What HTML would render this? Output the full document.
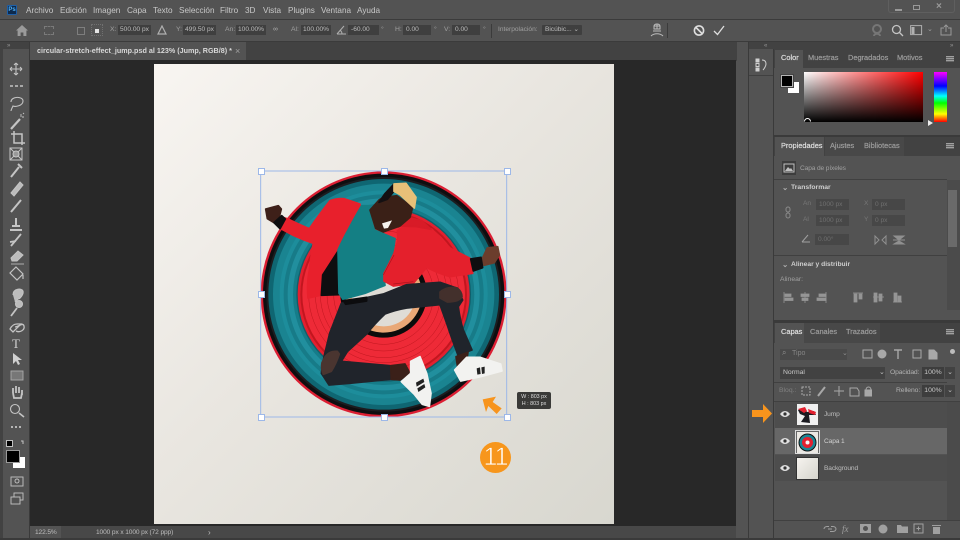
<!DOCTYPE html>
<html><head><meta charset="utf-8"><style>
html,body{margin:0;padding:0;background:#535353}
#r{position:relative;width:960px;height:540px;overflow:hidden;background:#535353;font-family:"Liberation Sans",sans-serif;color:#d0d0d0;filter:blur(.3px)}
#r div,#r svg{position:absolute}
.t{white-space:nowrap;font-size:8px;line-height:10px}
.m{top:5px;font-size:8.2px;line-height:11px;color:#c8c8c8;white-space:nowrap;position:absolute}
.o{top:25px;font-size:6.8px;line-height:10px;color:#a0a0a0;white-space:nowrap}
.f{top:25px;height:10px;background:#3f3f3f;color:#bdbdbd;font-size:6.6px;line-height:10px;text-align:center;white-space:nowrap}
.l{background:#3b3b3b}
.h{width:5px;height:5px;background:#fff;border:1px solid #9db8e8;box-sizing:content-box}
.g{background:#474747;color:#707070;font-size:6.6px;line-height:11px;height:11px;padding-left:3px;box-sizing:border-box;white-space:nowrap}
.d{color:#777;font-size:6.6px;line-height:10px;white-space:nowrap}
.tb{font-size:7.4px;-webkit-text-stroke:.2px currentColor;color:#9c9c9c}
.tb.a{color:#dedede}
.n{font-size:6.6px;letter-spacing:-.12px;color:#bdbdbd}
.p path{stroke:currentColor;fill:currentColor;stroke-width:5;stroke-linejoin:round}
</style></head><body><div id="r">
<!-- bars -->
<div class="l" style="left:0;top:19px;width:960px;height:1px"></div>
<div class="l" style="left:0;top:41px;width:960px;height:1px"></div>
<div style="left:7px;top:5px;width:10px;height:10px;background:#0d2a4d;border:1px solid #1d5fa8;box-sizing:border-box;border-radius:1px;color:#4fb0f5;font-size:6px;line-height:8px;font-weight:bold;text-align:center">Ps</div>
<div class="m" style="left:26px">Archivo</div><div class="m" style="left:60px">Edición</div><div class="m" style="left:93px">Imagen</div><div class="m" style="left:127px">Capa</div><div class="m" style="left:153px">Texto</div><div class="m" style="left:179px">Selección</div><div class="m" style="left:220px">Filtro</div><div class="m" style="left:245px">3D</div><div class="m" style="left:263px">Vista</div><div class="m" style="left:288px">Plugins</div><div class="m" style="left:321px">Ventana</div><div class="m" style="left:357px">Ayuda</div>
<!-- window controls -->
<div style="left:888px;top:0;width:67px;height:13px;border:1px solid #5f5f5f;border-top:0;border-radius:0 0 3px 3px;box-sizing:border-box"></div>
<div style="left:895px;top:9px;width:7px;height:1.5px;background:#999"></div>
<div style="left:913px;top:5px;width:7px;height:5px;border:1.3px solid #999;box-sizing:border-box"></div>
<div class="t" style="left:936px;top:2px;font-size:10px;color:#999;font-weight:bold">×</div>
<!-- options -->
<svg style="left:16px;top:25px" width="12" height="11" viewBox="0 0 12 11"><path d="M6 0L0 5.500h1.600V11h3V7.500h2.800V11h3V5.500H12z" fill="#9a9a9a"/></svg>
<div style="left:44px;top:26px;width:10px;height:9px;border:1px dashed #7a7a7a;box-sizing:border-box"></div>
<div style="left:77px;top:27px;width:8px;height:8px;border:1px solid #7e7e7e;box-sizing:border-box"></div>
<div style="left:91px;top:24px;width:12px;height:12px;border:1px dotted #707070;box-sizing:border-box"></div>
<div style="left:95px;top:29px;width:4px;height:4px;background:#e4e4e4"></div>
<div class="o" style="left:110px">X:</div><div class="f" style="left:118px;width:33px">500.00 px</div>
<svg style="left:157px;top:25px" width="10" height="10"><path d="M5 1L9 9H1z" fill="none" stroke="#b0b0b0" stroke-width="1.200"/></svg>
<div class="o" style="left:176px">Y:</div><div class="f" style="left:183px;width:33px">499.50 px</div>
<div class="o" style="left:225px">An:</div><div class="f" style="left:236px;width:30px">100.00%</div>
<div class="o" style="left:273px;color:#b0b0b0">∞</div>
<div class="o" style="left:291px">Al:</div><div class="f" style="left:301px;width:30px">100.00%</div>
<svg style="left:336px;top:25px" width="11" height="10"><path d="M1 9H10M1 9L8 1M6 9A5 5 0 0 0 4.500 5.500" fill="none" stroke="#b0b0b0"/></svg>
<div class="f" style="left:348px;width:31px;text-align:left;padding-left:3px;box-sizing:border-box">-60.00</div><div class="o" style="left:381px">°</div>
<div class="o" style="left:395px">H:</div><div class="f" style="left:403px;width:28px;text-align:left;padding-left:3px;box-sizing:border-box">0.00</div><div class="o" style="left:434px">°</div>
<div class="o" style="left:444px">V:</div><div class="f" style="left:452px;width:28px;text-align:left;padding-left:3px;box-sizing:border-box">0.00</div><div class="o" style="left:483px">°</div>
<div class="l" style="left:491px;top:24px;width:1px;height:14px"></div>
<div class="o" style="left:498px;font-size:6.6px">Interpolación:</div><div class="f" style="left:542px;width:40px;background:#3f3f3f;border-radius:1px">Bicúbic... ⌄</div>
<svg style="left:650px;top:23px" width="14" height="15" viewBox="0 0 14 15" fill="none" stroke="#bcbcbc"><path d="M4 3a3 2 0 0 1 6 0v3H4zM4 3h6M7 1v5M3 8h8M1 13c3-3 9-3 12 0"/></svg>
<div class="l" style="left:667px;top:23px;width:1px;height:15px"></div>
<svg style="left:693px;top:24px" width="12" height="13" viewBox="0 0 12 13"><circle cx="6" cy="6.500" r="4.600" fill="none" stroke="#dedede" stroke-width="1.600"/><path d="M3 3.500L9 9.500" stroke="#dedede" stroke-width="1.600"/></svg>
<svg style="left:713px;top:25px" width="12" height="11" viewBox="0 0 12 11"><path d="M1 6L4.500 9.500L11 1" fill="none" stroke="#dedede" stroke-width="1.300"/></svg>
<svg style="left:871px;top:24px" width="12" height="13" viewBox="0 0 12 13" fill="none" stroke="#767676" stroke-width="2"><circle cx="6" cy="5" r="4"/><path d="M3 12c0-3 6-3 6 0"/></svg>
<svg style="left:891px;top:24px" width="13" height="13" viewBox="0 0 13 13" fill="none" stroke="#c4c4c4" stroke-width="1.300"><circle cx="5.500" cy="5.500" r="4"/><path d="M8.500 8.500L12 12"/></svg>
<svg style="left:910px;top:25px" width="13" height="11" viewBox="0 0 13 11"><rect x=".6" y=".6" width="11" height="9" fill="none" stroke="#b0b0b0"/><rect x="1.500" y="2" width="3" height="7" fill="#b0b0b0"/></svg>
<div class="o" style="left:927px;top:25px;color:#a0a0a0">⌄</div>
<svg style="left:940px;top:24px" width="12" height="12" viewBox="0 0 12 12" fill="none" stroke="#999"><path d="M4 4H1v7h10V4H8M6 8V1M4 3l2-2 2 2"/></svg>
<!-- tab row -->
<div style="left:0;top:42px;width:960px;height:498px;background:#535353"></div>
<div style="left:30px;top:42px;width:707px;height:19px;background:#424242"></div>
<div style="left:30px;top:42px;width:216px;height:18px;background:#535353"></div>
<div class="t" style="left:37px;top:46px;font-size:7.2px;font-weight:bold;color:#d8d8d8">circular-stretch-effect_jump.psd al 123% (Jump, RGB/8) *</div>
<div class="t" style="left:235px;top:46px;color:#a0a0a0;font-size:9px">×</div>
<div style="left:3px;top:42px;width:26px;height:7px;background:#424242"></div>
<div class="t" style="left:7px;top:41px;font-size:6px;color:#999">»</div>
<div style="left:0;top:42px;width:3px;height:498px;background:#424242"></div>
<div style="left:29px;top:42px;width:1px;height:498px;background:#3a3a3a"></div>
<!-- workspace -->
<div style="left:30px;top:60px;width:706px;height:466px;background:#282828"></div>
<div style="left:154px;top:64px;width:460px;height:460px;background:linear-gradient(135deg,#f8f5f1 0%,#e9e6e0 45%,#d8d7cf 100%)"></div>
<!-- art -->
<svg style="left:250px;top:160px;filter:blur(.35px)" width="270" height="270" viewBox="0 0 810 810">
<circle cx="401" cy="403" r="369" fill="#dc1f33"/>
<circle cx="401" cy="403" r="362" fill="#0e0e10"/>
<circle cx="401" cy="403" r="352" fill="#1c1c1f"/>
<circle cx="401" cy="403" r="346" fill="#0f6672"/>
<circle cx="401" cy="403" r="332" fill="#1a8491"/>
<circle cx="401" cy="403" r="312" fill="#1d8d9b"/>
<circle cx="401" cy="403" r="300" fill="#177b88"/>
<circle cx="401" cy="403" r="288" fill="#218f9e"/>
<circle cx="401" cy="403" r="272" fill="#167c89"/>
<circle cx="401" cy="403" r="262" fill="#115e6a"/>
<circle cx="401" cy="403" r="258" fill="#e3202f"/>
<circle cx="401" cy="403" r="250" fill="#c2161f"/>
<circle cx="401" cy="403" r="244" fill="#ee2a37"/>
<g fill="none" stroke="#c0161f" stroke-width="1.500"><circle cx="401" cy="403" r="225"/><circle cx="401" cy="403" r="205"/><circle cx="401" cy="403" r="190"/><circle cx="401" cy="403" r="170"/><circle cx="401" cy="403" r="150"/></g>
<circle cx="401" cy="403" r="130" fill="#0c0c0c"/>
<circle cx="401" cy="403" r="115" fill="#e9a877"/>
<circle cx="401" cy="403" r="96" fill="#dfdcd6"/>
<g class="p">
<!-- jacket left -->
<path style="color:#e8202c" d="M97 172L112 176Q150 195 178 206Q210 160 240 122Q262 114 282 116L330 132L332 165Q300 205 270 255Q240 300 215 350L212 406L174 414Q170 370 178 330Q182 290 190 250Q160 240 130 226L92 206Z"/>
<path style="color:#0e0e10" d="M265 272L268 404L214 406L218 345Z"/>
<!-- shirt -->
<path style="color:#147f84" d="M335 137L358 137Q362 180 374 210L435 236Q432 265 425 290Q410 320 402 350L405 376L345 400L279 418L267 400L264 270Q280 235 294 210Q315 170 335 137Z"/>
<!-- jacket right -->
<path style="color:#e4202c" d="M442 212L480 188L545 207L600 264L664 297L668 340L600 350Q565 340 530 322L490 370L430 378L402 363L402 340Q418 310 432 280L444 240Z"/>
<path style="color:#d81b27" d="M452 198L472 172L515 182L543 208L500 200Z"/>
<!-- pants -->
<path style="color:#20242b" d="M274 430L345 414L400 402L470 374L570 367L620 384L638 420L625 440Q630 480 640 510L666 570L624 586Q605 535 590 490L570 434L470 444Q435 450 405 462Q375 490 350 522L292 575L274 604L420 617L420 658L300 670L237 675L214 640L222 590L239 520Z"/>
<path style="color:#0c0c0e" d="M280 422L350 412L350 423L287 433Z"/>
<path style="color:#43302c" d="M570 396Q592 378 622 384Q636 395 636 410Q628 426 592 426L570 414Z"/>
<path style="color:#4a3530" d="M224 592Q237 572 262 574L268 582Q258 612 244 634L220 643Q212 625 216 608Z"/>
<!-- skin legs -->
<path style="color:#3b2019" d="M422 617L465 612L480 640L450 660L424 658Z"/>
<path style="color:#3b2019" d="M618 590L654 577L650 603L624 630Z"/>
<!-- shoes -->
<path style="color:#f2f2f0" d="M614 630L650 592L690 592L752 612L756 633L692 650L632 663Z"/>
<path style="color:#f2f2f0" d="M454 665L482 640L482 604L510 590L530 640L543 700L538 739L517 733L492 702Z"/>
<!-- head -->
<path style="color:#3a2017" d="M397 114L440 107L488 142L480 172L450 198L400 216L377 205L360 150L387 120Z"/>
<path style="color:#141012" d="M387 127L404 102L430 74L430 96L412 118Z"/>
<path style="color:#e8c078" d="M432 72L468 70L498 112L493 144L450 104L432 94Z"/>
<!-- fists -->
<path style="color:#3e2019" d="M47 147L85 137L94 147L88 170L72 188L52 176Z"/>
<path style="color:#0e0e10" d="M72 188L95 167L106 177L90 206Z"/>
<path style="color:#6b3d2c" d="M697 295L712 264L743 260L748 285L733 308L702 316Z"/>
<path style="color:#0e0e10" d="M662 297L693 292L698 323L670 333Z"/>
</g>
<path d="M396 190L426 181L414 204L402 206Z" fill="#f5f2ee"/>
<path d="M680 625L690 622L692 642L682 644ZM694 622L704 620L704 640L696 642Z" fill="#222"/>
<path d="M498 668L520 656L523 666L500 680ZM502 685L523 672L526 682L505 696Z" fill="#222"/>
<path d="M430 372L490 365M400 345L432 285" stroke="#a8141d" stroke-width="2" fill="none"/>
<!-- bbox -->
<rect x="32" y="33" width="738" height="738" fill="none" stroke="#9db8e8" stroke-width="3"/>
<!-- orange arrow -->
<path d="M698 718L738 710L728 726L755 745L740 762L715 738L708 756Z" fill="#f7941d"/>
</svg>
<div class="h" style="left:258px;top:168px"></div><div class="h" style="left:381px;top:168px"></div><div class="h" style="left:504px;top:168px"></div>
<div class="h" style="left:258px;top:291px"></div><div class="h" style="left:504px;top:291px"></div>
<div class="h" style="left:258px;top:414px"></div><div class="h" style="left:381px;top:414px"></div><div class="h" style="left:504px;top:414px"></div>
<div style="left:517px;top:392px;width:34px;height:17px;background:#3a3a38;border-radius:2px;color:#ddd;font-size:5.4px;line-height:7px;padding-top:2px;box-sizing:border-box;text-align:center;white-space:nowrap">W : 803 px<br>H : 803 px</div>
<div style="left:480px;top:442px;width:31px;height:31px;background:#f7961c;border-radius:50%;color:#fff;font-size:25px;line-height:31px;text-align:center;letter-spacing:-1px;-webkit-text-stroke:.7px #f7961c">11</div>
<!-- toolbar icons -->
<svg style="left:3px;top:50px" width="26" height="470" viewBox="0 0 26 470" fill="none" stroke="#c4c4c4" stroke-width="1.100">
<path d="M13 13V25M7 19H19M13 13l-2 2M13 13l2 2M13 25l-2-2M13 25l2-2M7 19l2-2M7 19l2 2M19 19l-2-2M19 19l-2 2"/>
<path d="M7 36h3M12 36h3M17 36h3" stroke-width="1.600"/>
<path d="M8 52c0-6 12-6 12-1s-8 6-10 5c-1 2-2 4-2 5"/>
<path d="M8 79L17 69" stroke-width="2.200"/><path d="M18 64v3M21 67h-2M21 63l-1 1" stroke-width=".9"/>
<path d="M11 81V93H22M8 84H19V95" stroke-width="1.500"/>
<rect x="7" y="98" width="12" height="12" stroke-width="1"/><path d="M7 98L19 110M19 98L7 110" stroke-width="1"/><circle cx="13" cy="104" r="3" fill="#999"/>
<path d="M8 127L16 117M15 114l4 4" stroke-width="2"/>
<path d="M8 143L17 132l3 3-9 11z" fill="#bcbcbc" stroke-width="1"/>
<path d="M8 162L18 150" stroke-width="2"/>
<path d="M7 180H19M9 176H17M13 168V175" stroke-width="2"/>
<path d="M8 196L18 184M7 192l6-1" stroke-width="1.800"/>
<path d="M8 208L15 201l5 4-6 6H9z" fill="#bcbcbc" stroke-width="1"/><path d="M8 214H21" stroke-width=".8"/>
<path d="M13 217l7 7-6 6-7-7zM20 225v4" stroke-width="1.200"/>
<path d="M10 245c0-7 9-7 10-4s-3 8-5 8l-3 3" fill="#bcbcbc"/>
<circle cx="16" cy="254" r="3.500" fill="#bcbcbc"/><path d="M8 266L14 258" stroke-width="1.800"/>
<path d="M7 279c2-4 5-5 7-5l4 0-8 8zM12 277c3 0 8-5 9-1s-4 7-8 5" stroke-width="1.300"/>
<text x="13" y="298" font-family="Liberation Serif,serif" font-size="13" fill="#d0d0d0" stroke="none" text-anchor="middle">T</text>
<path d="M10 303v11l3-3 2 4 2-1-2-4h4z" fill="#d0d0d0" stroke="none"/>
<rect x="8" y="321" width="12" height="9" fill="#777" stroke="#aaa" stroke-width=".9"/>
<path d="M10 343v-5M13 343v-7M16 343v-6M19 345v-5M10 343l1 5h7l1-5" stroke-width="1.800"/>
<circle cx="12" cy="359" r="4.500"/><path d="M16 363L21 367" stroke-width="1.600"/>
<path d="M8 377h2M12 377h2M16 377h2" stroke-width="1.800"/>
<path d="M18 391h2v3" stroke-width="1"/>
<rect x="8" y="427" width="12" height="9" stroke-width=".9"/><circle cx="14" cy="431" r="2" stroke-width=".9"/>
<rect x="11" y="443" width="9" height="7" stroke-width=".9"/><rect x="8" y="447" width="9" height="7" fill="#535353" stroke-width=".9"/>
</svg>
<div style="left:6px;top:440px;width:5px;height:5px;background:#000;border:1px solid #c0c0c0;box-sizing:content-box"></div>
<div style="left:13px;top:457px;width:12px;height:11px;background:#fff"></div>
<div style="left:6px;top:450px;width:12px;height:11px;background:#000;border:1px solid #9a9a9a;box-sizing:content-box"></div>
<!-- status -->
<div style="left:30px;top:526px;width:706px;height:13px;background:#484848"></div>
<div style="left:30px;top:526px;width:31px;height:13px;background:#535353"></div>
<div class="t n" style="left:35px;top:528px">122.5%</div>
<div class="t n" style="left:96px;top:528px">1000 px x 1000 px (72 ppp)</div>
<div class="t" style="left:208px;top:528px;font-size:8px;color:#bdbdbd">›</div>
<div style="left:0;top:538px;width:960px;height:2px;background:#3a3a3a"></div>
<!-- right columns -->
<div style="left:748px;top:42px;width:1px;height:498px;background:#3a3a3a"></div>
<div style="left:749px;top:42px;width:211px;height:7px;background:#424242"></div>
<div class="t" style="left:764px;top:41px;font-size:6px;color:#999">«</div><div class="t" style="left:950px;top:41px;font-size:6px;color:#999">»</div>
<div style="left:749px;top:75px;width:24px;height:1px;background:#404040"></div>
<svg style="left:755px;top:58px" width="12" height="14" viewBox="0 0 12 14" fill="none" stroke="#d0d0d0"><rect x="1" y="1" width="3" height="3" fill="#d0d0d0"/><rect x="1" y="5.500" width="3" height="3"/><rect x="1" y="10" width="3" height="3" fill="#d0d0d0"/><path d="M7 2c3 0 4 2 4 4s-2 5-3 6"/></svg>
<div style="left:773px;top:49px;width:1px;height:491px;background:#3a3a3a"></div>
<!-- color panel -->
<div style="left:774px;top:49px;width:186px;height:19px;background:#424242"></div>
<div style="left:775px;top:50px;width:28px;height:18px;background:#535353"></div>
<div class="t tb a" style="left:781px;top:53px">Color</div>
<div class="t tb" style="left:808px;top:53px">Muestras</div>
<div class="t tb" style="left:848px;top:53px">Degradados</div>
<div class="t tb" style="left:897px;top:53px">Motivos</div>
<div style="left:946px;top:56px;width:8px;height:6px;background:repeating-linear-gradient(#a0a0a0 0 1px,#666 1px 2px)"></div>
<div style="left:788px;top:82px;width:11px;height:11px;background:#fff"></div>
<div style="left:781px;top:75px;width:10px;height:10px;background:#000;border:1px solid #b5b5b5;box-shadow:0 0 0 1px #444"></div>
<div style="left:804px;top:72px;width:119px;height:50px;background:linear-gradient(to bottom,rgba(0,0,0,0),#000),linear-gradient(to right,#fff,#f00)"></div>
<div style="left:934px;top:72px;width:13px;height:50px;background:linear-gradient(to bottom,#f0f,#00f 28%,#0ff 48%,#0f0 62%,#ff0 84%,#f00)"></div>
<div style="left:928px;top:120px;width:0;height:0;border-left:5px solid #eee;border-top:3px solid transparent;border-bottom:3px solid transparent"></div>
<div style="left:804px;top:118px;width:5px;height:5px;border:1px solid #fff;border-radius:50%;clip-path:inset(0 0 50% 0)"></div>
<div style="left:774px;top:135px;width:186px;height:2px;background:#3a3a3a"></div>
<!-- properties -->
<div style="left:774px;top:137px;width:186px;height:19px;background:#424242"></div>
<div style="left:775px;top:137px;width:49px;height:19px;background:#535353"></div>
<div style="left:825px;top:137px;width:32px;height:19px;background:#484848"></div>
<div style="left:857px;top:137px;width:47px;height:19px;background:#484848"></div>
<div class="t tb a" style="left:781px;top:141px">Propiedades</div>
<div class="t tb" style="left:830px;top:141px">Ajustes</div>
<div class="t tb" style="left:864px;top:141px">Bibliotecas</div>
<div style="left:946px;top:143px;width:8px;height:6px;background:repeating-linear-gradient(#a0a0a0 0 1px,#666 1px 2px)"></div>
<svg style="left:782px;top:161px" width="14" height="14" viewBox="0 0 14 14"><rect width="14" height="14" fill="#3d3d3d"/><rect x="2" y="3" width="10" height="8" fill="none" stroke="#c0c0c0"/><path d="M3 10l3-4 2 2 1-1 2 3z" fill="#c0c0c0"/></svg>
<div class="t n" style="left:800px;top:164px;color:#a0a0a0">Capa de píxeles</div>
<div style="left:774px;top:179px;width:173px;height:1px;background:#404040"></div>
<div class="t" style="left:782px;top:183px;font-size:7.500px;color:#b0b0b0;font-weight:bold">⌄</div>
<div class="t" style="left:791px;top:183px;font-size:6.8px;font-weight:bold;color:#cfcfcf">Transformar</div>
<svg style="left:785px;top:206px" width="6" height="13" viewBox="0 0 6 13" fill="none" stroke="#8a8a8a"><rect x="1" y="1" width="4" height="5" rx="2"/><rect x="1" y="7" width="4" height="5" rx="2"/></svg>
<div class="d" style="left:803px;top:199px">An</div><div class="g" style="left:816px;top:199px;width:33px">1000 px</div>
<div class="d" style="left:864px;top:199px">X</div><div class="g" style="left:872px;top:199px;width:33px">0 px</div>
<div class="d" style="left:803px;top:215px">Al</div><div class="g" style="left:816px;top:215px;width:33px">1000 px</div>
<div class="d" style="left:864px;top:215px">Y</div><div class="g" style="left:872px;top:215px;width:33px">0 px</div>
<svg style="left:801px;top:234px" width="10" height="9" fill="none" stroke="#a0a0a0"><path d="M1 8H9M1 8L7 1"/></svg>
<div class="g" style="left:815px;top:234px;width:34px">0.00°</div>
<svg style="left:874px;top:234px" width="36" height="12" fill="none" stroke="#909090"><path d="M1 2L5 6L1 10ZM12 2L8 6L12 10Z"/><path d="M20 2h10l-5 4zM20 10h10l-5-3zM19 6h12" fill="#909090"/></svg>
<div style="left:774px;top:255px;width:173px;height:1px;background:#404040"></div>
<div class="t" style="left:782px;top:260px;font-size:7.500px;color:#b0b0b0;font-weight:bold">⌄</div>
<div class="t" style="left:791px;top:260px;font-size:6.7px;font-weight:bold;color:#cfcfcf">Alinear y distribuir</div>
<div class="t" style="left:780px;top:275px;font-size:6.8px;color:#a0a0a0">Alinear:</div>
<svg style="left:782px;top:291px" width="120" height="13" fill="#959595" stroke="#959595" stroke-width=".8"><path d="M2 1V12" fill="none"/><rect x="3" y="3" width="6" height="2.500"/><rect x="3" y="7" width="8" height="2.500"/><path d="M23 1V12" fill="none"/><rect x="19" y="3" width="8" height="2.500"/><rect x="20" y="7" width="6" height="2.500"/><path d="M44 1V12" fill="none"/><rect x="37" y="3" width="7" height="2.500"/><rect x="35" y="7" width="9" height="2.500"/><path d="M71 2H81" fill="none"/><rect x="72" y="3" width="3" height="8"/><rect x="77" y="3" width="3" height="5"/><path d="M91 6H102" fill="none"/><rect x="92" y="2" width="3" height="9"/><rect x="97" y="3" width="3" height="7"/><path d="M111 11H120" fill="none"/><rect x="112" y="2" width="3" height="9"/><rect x="116" y="5" width="3" height="6"/></svg>
<!-- scrollbar -->
<div style="left:947px;top:180px;width:13px;height:130px;background:#4b4b4b"></div>
<div style="left:948px;top:190px;width:9px;height:57px;background:#6a6a6a"></div>
<div style="left:774px;top:320px;width:186px;height:3px;background:#3a3a3a"></div>
<!-- layers -->
<div style="left:774px;top:323px;width:186px;height:20px;background:#424242"></div>
<div style="left:775px;top:323px;width:29px;height:20px;background:#535353"></div>
<div style="left:804px;top:323px;width:36px;height:20px;background:#484848"></div>
<div style="left:840px;top:323px;width:40px;height:20px;background:#484848"></div>
<div class="t tb a" style="left:781px;top:327px">Capas</div>
<div class="t tb" style="left:810px;top:327px">Canales</div>
<div class="t tb" style="left:846px;top:327px">Trazados</div>
<div style="left:946px;top:329px;width:8px;height:6px;background:repeating-linear-gradient(#a0a0a0 0 1px,#666 1px 2px)"></div>
<div style="left:780px;top:349px;width:67px;height:11px;background:#4a4a4a"></div>
<div class="t" style="left:792px;top:349px;font-size:7px;color:#858585">Tipo</div><div class="t" style="left:782px;top:348px;font-size:8px;color:#909090">⌕</div><div class="t" style="left:842px;top:349px;font-size:7px;color:#909090">⌄</div>
<svg style="left:862px;top:348px" width="90" height="13" fill="none" stroke="#a8a8a8"><rect x="1" y="2" width="9" height="8"/><circle cx="20" cy="6" r="4" fill="#a8a8a8"/><path d="M32 2H40M36 2V11" stroke-width="1.400"/><rect x="51" y="2" width="8" height="8"/><path d="M67 2h5l3 3v6h-8z" fill="#a8a8a8"/></svg>
<div style="left:950px;top:349px;width:5px;height:5px;border-radius:50%;background:#bcbcbc"></div>
<div style="left:780px;top:367px;width:105px;height:12px;background:#424242"></div>
<div class="t" style="left:783px;top:368px;font-size:6.8px;color:#c8c8c8">Normal</div><div class="t" style="left:879px;top:368px;font-size:7px;color:#c0c0c0">⌄</div>
<div class="t" style="left:890px;top:368px;font-size:6.8px;letter-spacing:-.2px;color:#b0b0b0">Opacidad:</div>
<div style="left:922px;top:367px;width:22px;height:12px;background:#3d3d3d;font-size:6.8px;line-height:12px;color:#c8c8c8;text-align:center">100%</div>
<div style="left:945px;top:367px;width:10px;height:12px;background:#424242;font-size:7px;line-height:12px;color:#c0c0c0;text-align:center">⌄</div>
<div style="left:774px;top:382px;width:173px;height:1px;background:#404040"></div>
<div class="t" style="left:779px;top:386px;font-size:6.8px;color:#808080">Bloq.:</div>
<svg style="left:800px;top:385px" width="72" height="12" fill="none" stroke="#a8a8a8"><rect x="2" y="2" width="8" height="8" stroke-dasharray="2 1"/><path d="M18 11L25 2" stroke-width="2"/><path d="M34 6H44M39 1V11"/><path d="M50 3h7l2 3v5h-9z"/><rect x="65" y="5" width="7" height="6" fill="#a8a8a8"/><path d="M66 5c0-4 5-4 5 0"/></svg>
<div class="t" style="left:896px;top:386px;font-size:6.8px;letter-spacing:-.1px;color:#b0b0b0">Relleno:</div>
<div style="left:922px;top:385px;width:22px;height:12px;background:#3d3d3d;font-size:6.8px;line-height:12px;color:#c8c8c8;text-align:center">100%</div>
<div style="left:945px;top:385px;width:10px;height:12px;background:#424242;font-size:7px;line-height:12px;color:#c0c0c0;text-align:center">⌄</div>
<div style="left:774px;top:401px;width:186px;height:1px;background:#404040"></div>
<div style="left:775px;top:402px;width:172px;height:26px;background:#4d4d4d"></div>
<div style="left:775px;top:428px;width:172px;height:26px;background:#676767"></div>
<div style="left:775px;top:455px;width:172px;height:26px;background:#4d4d4d"></div>
<div style="left:947px;top:402px;width:13px;height:118px;background:#4b4b4b"></div>
<svg style="left:780px;top:410px" width="10" height="66" viewBox="0 0 10 66"><path d="M0 4c3-4 7-4 10 0c-3 4-7 4-10 0z" fill="#e0e0e0"/><circle cx="5" cy="4" r="1.600" fill="#333"/><g transform="translate(0,27)"><path d="M0 4c3-4 7-4 10 0c-3 4-7 4-10 0z" fill="#e0e0e0"/><circle cx="5" cy="4" r="1.600" fill="#333"/></g><g transform="translate(0,54)"><path d="M0 4c3-4 7-4 10 0c-3 4-7 4-10 0z" fill="#e0e0e0"/><circle cx="5" cy="4" r="1.600" fill="#333"/></g></svg>
<svg style="left:797px;top:404px" width="21" height="21" viewBox="0 0 21 21"><rect width="21" height="21" fill="#f0f0f0"/><path d="M1 6L7 4L10 8L17 7L19 11L12 11L13 19L4 18L8 12L3 10Z" fill="#1a1a20"/><path d="M1 5L8 3L10 7L7 9ZM11 5L19 8L18 11L12 9Z" fill="#e3202f"/></svg>
<div style="left:795px;top:430px;width:25px;height:24px;border:1px solid #dcdcdc;box-sizing:border-box"></div>
<svg style="left:797px;top:432px" width="21" height="21" viewBox="0 0 21 21"><rect width="21" height="21" fill="#ece9e4"/><circle cx="10.500" cy="10.500" r="9" fill="#111"/><circle cx="10.500" cy="10.500" r="8" fill="#1a8594"/><circle cx="10.500" cy="10.500" r="5.500" fill="#e3202f"/><circle cx="10.500" cy="10.500" r="2" fill="#f5f5f5"/></svg>
<div style="left:797px;top:458px;width:21px;height:21px;background:linear-gradient(135deg,#f6f3ef,#d5d4cc);outline:1px solid #333"></div>
<div class="t n" style="left:824px;top:410px">Jump</div>
<div class="t n" style="left:824px;top:437px;color:#d0d0d0">Capa 1</div>
<div class="t n" style="left:824px;top:464px">Background</div>
<svg style="left:751px;top:404px" width="22" height="20" viewBox="0 0 22 20"><path d="M1 6H12V0L21 9.500L12 19V13H1Z" fill="#f7941d"/></svg>
<div style="left:774px;top:520px;width:186px;height:1px;background:#404040"></div>
<svg style="left:823px;top:522px" width="120" height="14" fill="#a0a0a0" stroke="none"><path d="M1 7a3 2.500 0 0 1 3-2.500h2M10 9.500H7M5 7h4M8 4.500h2a3 2.500 0 0 1 0 5" fill="none" stroke="#a0a0a0"/><text x="19" y="10" font-family="Liberation Serif,serif" font-style="italic" font-size="9">fx</text><rect x="37" y="2" width="11" height="9"/><circle cx="42.500" cy="6.500" r="2.500" fill="#535353"/><circle cx="60" cy="7" r="4.500"/><path d="M74 3h4l1 1.500h6V11H74z"/><rect x="91" y="2" width="9" height="9" fill="none" stroke="#a0a0a0"/><path d="M95.500 4.500v4M93.500 6.500h4" stroke="#a0a0a0"/><path d="M109 3h9v1h-9zM110 5h7v7h-7z"/></svg>
</div></body></html>
